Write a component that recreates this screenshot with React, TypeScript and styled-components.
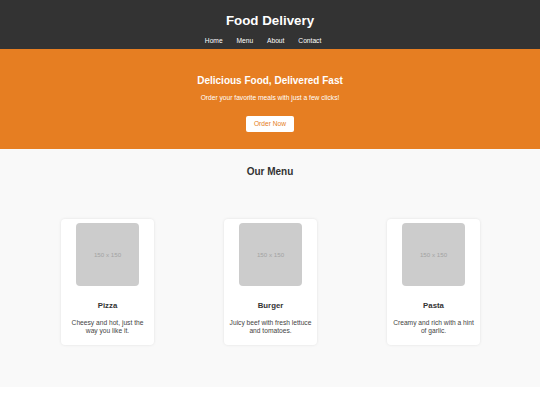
import React from "react";
import styled, { createGlobalStyle } from "styled-components";

const GlobalStyle = createGlobalStyle`
  html, body {
    margin: 0;
    padding: 0;
    background: #ffffff;
    font-family: "Liberation Sans", Arial, sans-serif;
    color: #333333;
  }
  * { box-sizing: border-box; }
`;

const Page = styled.div`
  display: flex;
  flex-direction: column;
`;

const Header = styled.header`
  background: #333333;
  color: #ffffff;
  padding: 4.17px 0;
  text-align: center;
`;

const SiteTitle = styled.h1`
  margin: 8.6px 0 8.93px;
  font-size: 13.33px;
  font-weight: 700;
  line-height: 15.3px;
`;

const NavList = styled.ul`
  list-style: none;
  margin: 0;
  padding: 0;
  display: flex;
  justify-content: center;
`;

const NavItem = styled.li`
  margin-right: 13.9px;
`;

const NavLink = styled.a`
  color: #ffffff;
  text-decoration: none;
  font-size: 6.67px;
  line-height: 7.67px;
  display: block;
`;

const Hero = styled.section`
  background: #e67e22;
  color: #ffffff;
  padding: 25.9px 8.33px 17.5px;
  display: flex;
  flex-direction: column;
  align-items: center;
  text-align: center;
`;

const HeroTitle = styled.h2`
  margin: 0 0 7.4px;
  font-size: 10px;
  font-weight: 700;
  line-height: 11.5px;
`;

const HeroText = styled.p`
  margin: 0 0 14.3px;
  font-size: 6.67px;
  line-height: 7.67px;
`;

const OrderButton = styled.button`
  background: #ffffff;
  color: #e67e22;
  border: none;
  border-radius: 2px;
  padding: 4.17px 8.33px;
  font-family: inherit;
  font-size: 6.67px;
  line-height: 7.67px;
  cursor: pointer;
`;

const MenuSection = styled.section`
  background: #f9f9f9;
  padding: 17px 0 42px;
  text-align: center;
`;

const SectionTitle = styled.h2`
  margin: 0 0 41.5px;
  font-size: 10px;
  font-weight: 700;
  line-height: 11.5px;
  color: #333333;
`;

const CardRow = styled.div`
  display: flex;
  justify-content: center;
  gap: 69.5px;
  padding-left: 1px;
`;

const Card = styled.div`
  width: 93.5px;
  background: #ffffff;
  border-radius: 4px;
  padding: 4px 4.75px;
  box-shadow: 0 0 3px rgba(0, 0, 0, 0.1);
  display: flex;
  flex-direction: column;
  align-items: center;
`;

const Placeholder = styled.div`
  width: 63px;
  height: 63px;
  border-radius: 4px;
  background: #cccccc;
  color: #a3a3a3;
  font-size: 6.2px;
  display: flex;
  align-items: center;
  justify-content: center;
`;

const CardTitle = styled.h3`
  margin: 14.8px 0 9.6px;
  font-size: 7.8px;
  font-weight: 700;
  line-height: 9px;
  color: #333333;
`;

const CardText = styled.p`
  margin: 0 0 5.8px;
  font-size: 6.67px;
  line-height: 7.65px;
  color: #444444;
`;

const navItems = ["Home", "Menu", "About", "Contact"];

const dishes = [
  { name: "Pizza", desc: "Cheesy and hot, just the way you like it." },
  { name: "Burger", desc: "Juicy beef with fresh lettuce and tomatoes." },
  { name: "Pasta", desc: "Creamy and rich with a hint of garlic." },
];

export default function App() {
  return (
    <Page>
      <GlobalStyle />
      <Header>
        <SiteTitle>Food Delivery</SiteTitle>
        <nav>
          <NavList>
            {navItems.map((item) => (
              <NavItem key={item}>
                <NavLink href="#">{item}</NavLink>
              </NavItem>
            ))}
          </NavList>
        </nav>
      </Header>
      <Hero>
        <HeroTitle>Delicious Food, Delivered Fast</HeroTitle>
        <HeroText>Order your favorite meals with just a few clicks!</HeroText>
        <OrderButton>Order Now</OrderButton>
      </Hero>
      <MenuSection>
        <SectionTitle>Our Menu</SectionTitle>
        <CardRow>
          {dishes.map((d) => (
            <Card key={d.name}>
              <Placeholder>150 x 150</Placeholder>
              <CardTitle>{d.name}</CardTitle>
              <CardText>{d.desc}</CardText>
            </Card>
          ))}
        </CardRow>
      </MenuSection>
    </Page>
  );
}
